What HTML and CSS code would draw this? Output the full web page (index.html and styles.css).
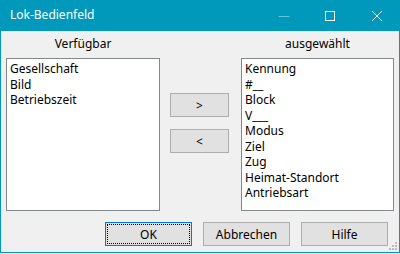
FILE: index.html
```html
<!DOCTYPE html>
<html>
<head>
<meta charset="utf-8">
<link rel="stylesheet" href="styles.css">
</head>
<body>
<div class="window">
  <div class="titlebar">
    <span class="title">Lok-Bedienfeld</span>
    <div class="controls">
      <span class="ctl min"><svg width="12" height="12" viewBox="0 0 12 12"><path d="M0.5 6.5H11.5" stroke="#66c4da" stroke-width="1"/></svg></span>
      <span class="ctl max"><svg width="12" height="12" viewBox="0 0 12 12"><rect x="1.5" y="1.5" width="9" height="9" fill="none" stroke="#fff" stroke-width="1"/></svg></span>
      <span class="ctl close"><svg width="12" height="12" viewBox="0 0 12 12"><path d="M1 1L11 11M11 1L1 11" stroke="#fff" stroke-width="1"/></svg></span>
    </div>
  </div>
  <div class="content">
    <div class="main">
      <div class="col left">
        <div class="label">Verfügbar</div>
        <div class="listbox">
          <div class="item">Gesellschaft</div>
          <div class="item">Bild</div>
          <div class="item">Betriebszeit</div>
        </div>
      </div>
      <div class="mid">
        <button class="btn small">&gt;</button>
        <button class="btn small">&lt;</button>
      </div>
      <div class="col right">
        <div class="label">ausgewählt</div>
        <div class="listbox">
          <div class="item">Kennung</div>
          <div class="item">#__</div>
          <div class="item">Block</div>
          <div class="item">V___</div>
          <div class="item">Modus</div>
          <div class="item">Ziel</div>
          <div class="item">Zug</div>
          <div class="item">Heimat-Standort</div>
          <div class="item">Antriebsart</div>
        </div>
      </div>
    </div>
    <div class="footer">
      <button class="btn dlg default"><span class="focus">OK</span></button>
      <button class="btn dlg">Abbrechen</button>
      <button class="btn dlg">Hilfe</button>
    </div>
    <svg class="grip" width="8" height="8" viewBox="0 0 8 8">
      <rect x="6" y="0" width="2" height="2" fill="#bcbcbc"/>
      <rect x="3" y="3" width="2" height="2" fill="#bcbcbc"/>
      <rect x="6" y="3" width="2" height="2" fill="#bcbcbc"/>
      <rect x="0" y="6" width="2" height="2" fill="#bcbcbc"/>
      <rect x="3" y="6" width="2" height="2" fill="#bcbcbc"/>
      <rect x="6" y="6" width="2" height="2" fill="#bcbcbc"/>
    </svg>
  </div>
</div>
</body>
</html>
```
FILE: styles.css
```css
* { box-sizing: border-box; }
html, body { margin: 0; padding: 0; }
body {
  width: 400px;
  height: 254px;
  overflow: hidden;
  font-family: "Noto Sans", "Open Sans", sans-serif;
  font-size: 12px;
  color: #000;
  background: #fff;
}
.window {
  width: 400px;
  height: 253px;
  border: 1px solid #0099bc;
  border-top: none;
  background: #f0f0f0;
  display: flex;
  flex-direction: column;
}
.titlebar {
  height: 31px;
  background: #0099bc;
  display: flex;
  align-items: center;
  color: #fff;
  margin: 0 -1px;
  padding-left: 10px;
}
.title {
  font-size: 12px;
  flex: 1;
  line-height: 1;
  padding-bottom: 1px;
}
.controls {
  display: flex;
  height: 100%;
}
.ctl {
  width: 46px;
  display: flex;
  align-items: center;
  justify-content: center;
  height: 100%;
}
.ctl.close { width: 47px; }
.content {
  position: relative;
  flex: 1;
  display: flex;
  flex-direction: column;
  padding: 0 4px 0 5px;
}
.main {
  display: flex;
  align-items: flex-start;
}
.col {
  display: flex;
  flex-direction: column;
}
.col.left { width: 154px; }
.col.right { width: 153px; }
.label {
  height: 27px;
  padding-top: 5px;
  text-align: center;
  line-height: 16px;
}
.listbox {
  height: 153px;
  background: #fff;
  border: 1px solid #828790;
  padding: 2px 3px;
}
.item {
  height: 15.5px;
  line-height: 15.5px;
  white-space: nowrap;
}
.mid {
  width: 81px;
  display: flex;
  flex-direction: column;
  padding: 62px 12px 0 10px;
  gap: 12px;
}
.btn {
  font-family: inherit;
  font-size: 12px;
  color: #000;
  background: #e1e1e1;
  border: 1px solid #adadad;
  padding: 0;
  margin: 0;
}
.btn.small {
  width: 59px;
  height: 24px;
}
.footer {
  display: flex;
  gap: 11px;
  padding: 11px 0 0 99px;
}
.btn.dlg {
  width: 87px;
  height: 24px;
}
.btn.default {
  border: 1px solid #0078d7;
  padding: 1px;
}
.focus {
  display: flex;
  align-items: center;
  justify-content: center;
  width: 100%;
  height: 100%;
  border: 1px dotted #000;
}
.grip {
  position: absolute;
  right: 2px;
  bottom: 2px;
}
```
